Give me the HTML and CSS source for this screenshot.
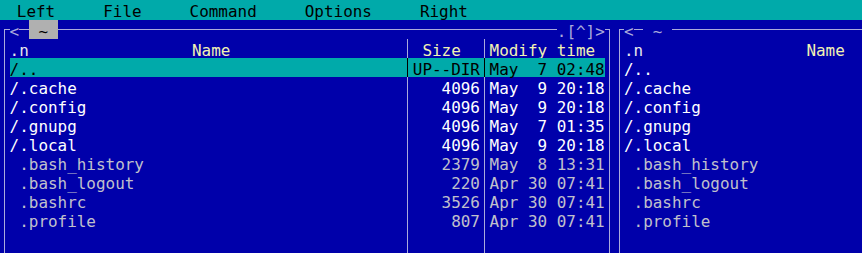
FILE: index.html
```html
<!DOCTYPE html>
<html>
<head>
<meta charset="utf-8">
<title>mc</title>
<link rel="stylesheet" href="styles.css">
</head>
<body>
<div class="screen">
  <nav class="menubar">
    <span>Left</span><span>File</span><span>Command</span><span>Options</span><span>Right</span>
  </nav>
  <div class="panels">
    <section class="panel">
      <div class="title">
        <span class="corner corner-l"></span>
        <span class="tt">&lt;</span>
        <span class="rule rule-cell"></span>
        <span class="path active"> ~ </span>
        <span class="rule rule-fill"></span>
        <span class="tt">.[^]&gt;</span>
        <span class="corner corner-r"></span>
      </div>
      <div class="body">
        <div class="row head"><span class="c name"><span class="sort">.n</span><span class="hn">Name</span></span><span class="sep"></span><span class="c size ctr">Size</span><span class="sep"></span><span class="c time">Modify time</span></div>
        <div class="row dir sel"><span class="c name">/..</span><span class="sep"></span><span class="c size">UP--DIR</span><span class="sep"></span><span class="c time">May  7 02:48</span></div>
        <div class="row dir"><span class="c name">/.cache</span><span class="sep"></span><span class="c size">4096</span><span class="sep"></span><span class="c time">May  9 20:18</span></div>
        <div class="row dir"><span class="c name">/.config</span><span class="sep"></span><span class="c size">4096</span><span class="sep"></span><span class="c time">May  9 20:18</span></div>
        <div class="row dir"><span class="c name">/.gnupg</span><span class="sep"></span><span class="c size">4096</span><span class="sep"></span><span class="c time">May  7 01:35</span></div>
        <div class="row dir"><span class="c name">/.local</span><span class="sep"></span><span class="c size">4096</span><span class="sep"></span><span class="c time">May  9 20:18</span></div>
        <div class="row file"><span class="c name"> .bash_history</span><span class="sep"></span><span class="c size">2379</span><span class="sep"></span><span class="c time">May  8 13:31</span></div>
        <div class="row file"><span class="c name"> .bash_logout</span><span class="sep"></span><span class="c size">220</span><span class="sep"></span><span class="c time">Apr 30 07:41</span></div>
        <div class="row file"><span class="c name"> .bashrc</span><span class="sep"></span><span class="c size">3526</span><span class="sep"></span><span class="c time">Apr 30 07:41</span></div>
        <div class="row file"><span class="c name"> .profile</span><span class="sep"></span><span class="c size">807</span><span class="sep"></span><span class="c time">Apr 30 07:41</span></div>
        <div class="row"><span class="c name"></span><span class="sep"></span><span class="c size"></span><span class="sep"></span><span class="c time"></span></div>
        <div class="row"><span class="c name"></span><span class="sep"></span><span class="c size"></span><span class="sep"></span><span class="c time"></span></div>
      </div>
    </section>
    <section class="panel">
      <div class="title">
        <span class="corner corner-l"></span>
        <span class="tt">&lt;</span>
        <span class="rule rule-cell"></span>
        <span class="path"> ~ </span>
        <span class="rule rule-fill"></span>
        <span class="tt">.[^]&gt;</span>
        <span class="corner corner-r"></span>
      </div>
      <div class="body">
        <div class="row head"><span class="c name"><span class="sort">.n</span><span class="hn">Name</span></span><span class="sep"></span><span class="c size ctr">Size</span><span class="sep"></span><span class="c time">Modify time</span></div>
        <div class="row dir"><span class="c name">/..</span><span class="sep"></span><span class="c size">UP--DIR</span><span class="sep"></span><span class="c time">May  7 02:48</span></div>
        <div class="row dir"><span class="c name">/.cache</span><span class="sep"></span><span class="c size">4096</span><span class="sep"></span><span class="c time">May  9 20:18</span></div>
        <div class="row dir"><span class="c name">/.config</span><span class="sep"></span><span class="c size">4096</span><span class="sep"></span><span class="c time">May  9 20:18</span></div>
        <div class="row dir"><span class="c name">/.gnupg</span><span class="sep"></span><span class="c size">4096</span><span class="sep"></span><span class="c time">May  7 01:35</span></div>
        <div class="row dir"><span class="c name">/.local</span><span class="sep"></span><span class="c size">4096</span><span class="sep"></span><span class="c time">May  9 20:18</span></div>
        <div class="row file"><span class="c name"> .bash_history</span><span class="sep"></span><span class="c size">2379</span><span class="sep"></span><span class="c time">May  8 13:31</span></div>
        <div class="row file"><span class="c name"> .bash_logout</span><span class="sep"></span><span class="c size">220</span><span class="sep"></span><span class="c time">Apr 30 07:41</span></div>
        <div class="row file"><span class="c name"> .bashrc</span><span class="sep"></span><span class="c size">3526</span><span class="sep"></span><span class="c time">Apr 30 07:41</span></div>
        <div class="row file"><span class="c name"> .profile</span><span class="sep"></span><span class="c size">807</span><span class="sep"></span><span class="c time">Apr 30 07:41</span></div>
        <div class="row"><span class="c name"></span><span class="sep"></span><span class="c size"></span><span class="sep"></span><span class="c time"></span></div>
        <div class="row"><span class="c name"></span><span class="sep"></span><span class="c size"></span><span class="sep"></span><span class="c time"></span></div>
      </div>
    </section>
  </div>
</div>
</body>
</html>
```
FILE: styles.css
```css
:root {
  --cell: 9.6px;
  --row: 19px;
  --text-lh: 23px;
  --blue: #0000aa;
  --cyan: #00aaaa;
  --line: #aaaadc;
  --dir: #ffffff;
  --file: #c0c0cc;
  --head: #f2f2b4;
}

html, body {
  margin: 0;
  padding: 0;
  background: var(--blue);
}

.screen {
  width: 862px;
  height: 253px;
  overflow: hidden;
  background: var(--blue);
  font-family: "DejaVu Sans Mono", "Liberation Mono", monospace;
  font-size: 15.95px;
  line-height: var(--text-lh);
}

.menubar {
  display: flex;
  gap: 48px;
  height: 20px;
  padding-left: 16.8px;
  background: var(--cyan);
  color: #000;
  line-height: 24px;
}

.panels {
  display: flex;
  width: 1300px;
}

.panel {
  flex: none;
  width: 614.4px;
  display: flex;
  flex-direction: column;
}

.title {
  display: flex;
  height: var(--row);
  padding: 0 4.3px;
  color: var(--line);
}

.corner {
  flex: none;
  width: 4.3px;
  height: 10px;
  margin-top: 9px;
  border-top: 1px solid var(--line);
}

.corner-l {
  border-left: 1px solid var(--line);
}

.corner-r {
  border-right: 1px solid var(--line);
}

.tt,
.path,
.c {
  white-space: pre;
}

.tt {
  flex: none;
}

.rule {
  height: 1px;
  margin-top: 9px;
  background: var(--line);
}

.rule-cell {
  flex: none;
  width: var(--cell);
}

.rule-fill {
  flex: 1;
}

.path {
  flex: none;
  height: var(--row);
  color: #000;
}

.path:not(.active) {
  color: var(--line);
}

.path.active {
  background: #b0b0b0;
}

.body {
  margin: 0 4.3px;
  padding: 0 4.3px;
  border-left: 1px solid var(--line);
  border-right: 1px solid var(--line);
  display: flex;
  flex-direction: column;
}

.row {
  display: grid;
  grid-template-columns: 393.6px 9.6px 67.2px 9.6px 115.2px;
  height: var(--row);
}

.c {
  height: var(--row);
}

.size {
  text-align: right;
}

.size.ctr {
  text-align: left;
  padding-left: var(--cell);
}

.sep {
  background: linear-gradient(var(--line), var(--line)) center / 1px 100% no-repeat;
}

.head {
  color: var(--head);
}

.head .sort {
  color: #e8e8ec;
}

.head .hn {
  margin-left: calc(var(--cell) * 17);
}

.dir {
  color: var(--dir);
}

.file {
  color: var(--file);
}

.row.sel {
  background: var(--cyan);
  color: #000;
}

.row.sel .sep {
  background: linear-gradient(#000, #000) center / 1px 100% no-repeat;
}
```
